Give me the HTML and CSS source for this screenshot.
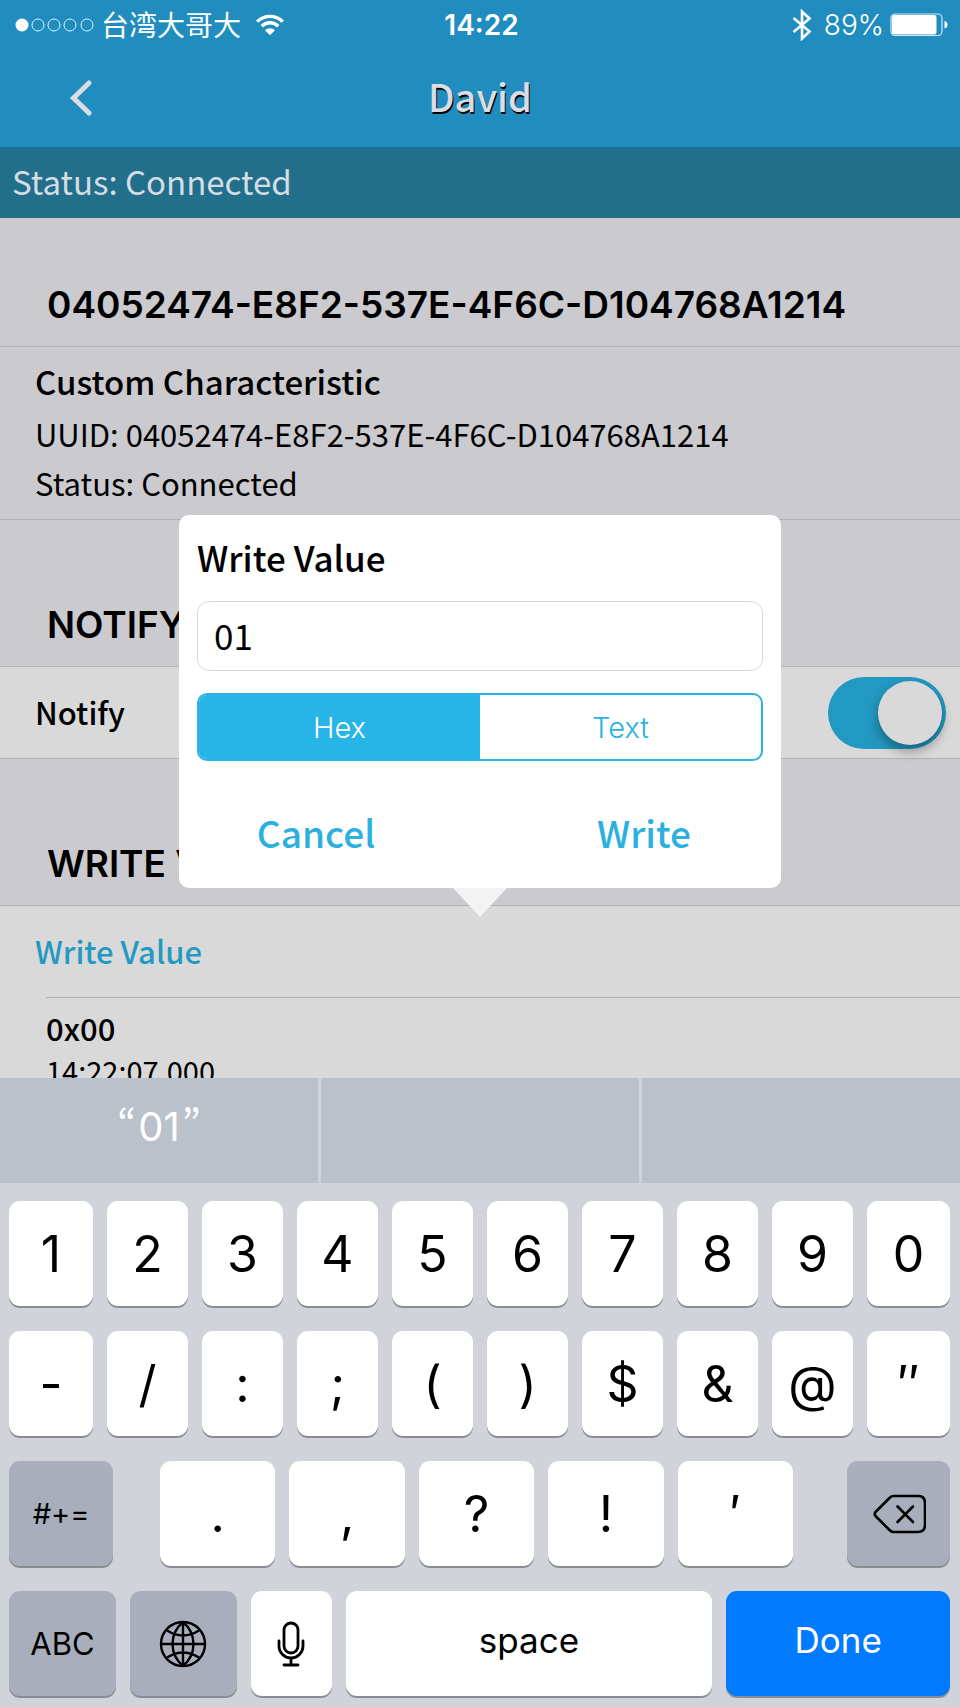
FILE: index.html
```html
<!DOCTYPE html>
<html lang="en">
<head>
<meta charset="utf-8">
<meta name="viewport" content="width=device-width, initial-scale=1">
<title>David</title>
<link rel="stylesheet" href="styles.css">
</head>
<body>
<div class="app">
  <header class="top">
    <div class="statusbar">
      <div class="carrier">
        <svg class="signal" viewBox="0 0 80 16" aria-hidden="true">
          <circle cx="7" cy="8" r="6.5" fill="#fff"/>
          <g fill="none" stroke="#d9f1fb" stroke-width="1"><circle cx="23" cy="8" r="6"/><circle cx="39" cy="8" r="6"/><circle cx="55" cy="8" r="6"/><circle cx="72" cy="8" r="6"/></g>
        </svg>
        <span class="carrier-name" lang="zh-CN">台湾大哥大</span>
        <svg class="wifi" viewBox="0 0 28 22" aria-hidden="true">
          <g fill="none" stroke="#fff" stroke-width="3.400"><path d="M1.2 7.6a18.2 18.2 0 0 1 25.6 0"/><path d="M5.800 12.2a11.6 11.6 0 0 1 16.4 0"/></g>
          <path d="M9 16.2a7.2 7.2 0 0 1 10 0L14 21.2z" fill="#fff"/>
        </svg>
      </div>
      <time class="clock">14:22</time>
      <div class="power">
        <svg class="bluetooth" viewBox="0 0 20 32" aria-hidden="true"><path d="M1.500 9L17.500 22.500 10 29.500V2.500L17.500 9.500 1.500 23" fill="none" stroke="#fff" stroke-width="2.600"/></svg>
        <span class="percent">89%</span>
        <svg class="battery" viewBox="0 0 58 24" aria-hidden="true">
          <rect x="1" y="1" width="51" height="21.500" rx="4" fill="none" stroke="#cdebf8" stroke-width="1.200"/>
          <rect x="2" y="2" width="44.500" height="19.500" rx="2.500" fill="#fff"/>
          <path d="M54.500 8q3 1 3 3.800t-3 3.800z" fill="#fff"/>
        </svg>
      </div>
    </div>
    <nav class="navbar">
      <button class="back" aria-label="Back"><svg viewBox="0 0 24 36" aria-hidden="true"><path d="M20 3L4.500 18 20 33" fill="none" stroke="#dcdce2" stroke-width="5" stroke-linecap="round"/></svg></button>
      <h1 class="title">David</h1>
    </nav>
  </header>
  <p class="connection">Status: Connected</p>

  <main class="content">
    <h2 class="section">04052474-E8F2-537E-4F6C-D104768A1214</h2>
    <div class="summary">
      <h3 class="summary-name">Custom Characteristic</h3>
      <p>UUID: 04052474-E8F2-537E-4F6C-D104768A1214</p>
      <p>Status: Connected</p>
    </div>

    <h2 class="section section-later">NOTIFY</h2>
    <div class="row">
      <label class="row-label" for="notify">Notify</label>
      <input class="switch" id="notify" type="checkbox" role="switch" checked>
    </div>

    <h2 class="section section-later">WRITE VALUE</h2>
    <div class="write">
      <button class="row write-open"><span class="row-label">Write Value</span></button>
      <div class="entry">
        <strong class="entry-value">0x00</strong>
        <time class="entry-time">14:22:07.000</time>
      </div>

      <form class="popup" role="dialog" aria-labelledby="popup-title">
        <label class="popup-title" id="popup-title" for="value">Write Value</label>
        <input class="value" id="value" type="text" value="01">
        <div class="segments" role="radiogroup" aria-label="Format">
          <label class="segment"><input type="radio" name="format" checked><span>Hex</span></label>
          <label class="segment"><input type="radio" name="format"><span>Text</span></label>
        </div>
        <div class="actions">
          <button type="button">Cancel</button>
          <button type="button">Write</button>
        </div>
      </form>
    </div>
  </main>

  <section class="keyboard" aria-label="Keyboard">
    <div class="suggestions">
      <button><span class="quote">“</span>01<span class="quote">”</span></button><button aria-label="Suggestion 2"></button><button aria-label="Suggestion 3"></button>
    </div>
    <div class="keys">
      <div class="keyrow tens">
        <button class="key">1</button><button class="key">2</button><button class="key">3</button><button class="key">4</button><button class="key">5</button><button class="key">6</button><button class="key">7</button><button class="key">8</button><button class="key">9</button><button class="key">0</button>
      </div>
      <div class="keyrow tens">
        <button class="key">-</button><button class="key">/</button><button class="key">:</button><button class="key">;</button><button class="key">(</button><button class="key">)</button><button class="key">$</button><button class="key">&amp;</button><button class="key">@</button><button class="key">″</button>
      </div>
      <div class="keyrow marks">
        <button class="key grey symbols">#+=</button>
        <div class="marks-group"><button class="key">.</button><button class="key">,</button><button class="key">?</button><button class="key">!</button><button class="key">′</button></div>
        <button class="key grey" aria-label="Delete"><svg class="icon-delete" viewBox="0 0 54 40" fill="none" stroke="#000" stroke-width="2.600" stroke-linecap="round" stroke-linejoin="round" aria-hidden="true"><path d="M21.500 2H46q7 0 7 7v22q0 7-7 7H21.500q-2 0-3.500-1.500L3.500 22q-1.500-2 0-4L18 3.500Q19.500 2 21.500 2z"/><path d="M25.500 12.500l15.500 15.500M41 12.500L25.500 28"/></svg></button>
      </div>
      <div class="keyrow bottom">
        <button class="key grey abc">ABC</button>
        <button class="key grey" aria-label="Next keyboard"><svg class="icon-globe" viewBox="0 0 48 48" fill="none" stroke="#000" stroke-width="2.400" aria-hidden="true"><circle cx="24" cy="24" r="22"/><path d="M24 2v44M2 24h44M24 2C10 14 10 34 24 46M24 2c14 12 14 32 0 44M8 10.500q16 10 32 0M8 37.500q16-10 32 0"/></svg></button>
        <button class="key" aria-label="Dictate"><svg class="icon-mic" viewBox="0 0 28 46" fill="none" stroke="#000" stroke-width="2.800" stroke-linecap="round" aria-hidden="true"><rect x="7" y="2" width="14" height="30" rx="7"/><path d="M2 20v5a12 12 0 0 0 24 0v-5M14 37v7M7 44h14"/></svg></button>
        <button class="key word">space</button>
        <button class="key word done">Done</button>
      </div>
    </div>
  </section>
</div>
</body>
</html>
```

FILE: styles.css
```css
* { box-sizing: border-box; }

body, h1, h2, h3, p { margin: 0; }

body {
  font-family: "Noto Sans CJK SC", "Noto Sans", sans-serif;
  color: #000;
  background: #cbcacf;
}

button {
  margin: 0;
  padding: 0;
  border: 0;
  background: none;
  color: inherit;
  font: inherit;
}

svg { display: block; }

.app {
  display: flex;
  flex-direction: column;
  height: 100vh;
  overflow: hidden;
}

.top {
  background: #218dbf;
  border-bottom: 2px solid #1b6f96;
}

.statusbar {
  display: grid;
  grid-template-columns: 1fr auto 1fr;
  align-items: center;
  height: 48px;
  padding: 0 12px 0 15px;
  font-family: Inter, sans-serif;
  font-size: 28px;
  line-height: 48px;
  color: #fff;
}

.carrier, .power { display: flex; align-items: center; }
.power { justify-content: flex-end; gap: 6px; }
.signal { width: 80px; height: 16px; }
.carrier-name {
  margin: 0 15px 2px 6px;
  font-family: "Noto Sans CJK SC", sans-serif;
  font-weight: 400;
}
.wifi { width: 28px; height: 22px; }
.clock { font-weight: 600; }
.percent { font-weight: 300; }
.bluetooth { width: 20px; height: 32px; margin-right: 6px; }
.battery { width: 58px; height: 24px; }

.navbar {
  display: grid;
  grid-template-columns: 150px 1fr 150px;
  align-items: center;
  height: 99px;
}
.back { padding-left: 69px; }
.back svg { width: 24px; height: 36px; }
.title {
  padding-bottom: 4px;
  font-size: 38px;
  font-weight: 500;
  line-height: 56px;
  text-align: center;
  color: #dcdce2;
  text-shadow: 1px 2px 0 #000;
}

.connection {
  padding: 0 12px 4px;
  background: #216f8a;
  color: #d6dce4;
  font-size: 33px;
  line-height: 65px;
}

.content { flex: 1; min-height: 0; overflow: hidden; }

.section {
  padding: 61px 47px 15px;
  border-bottom: 1px solid #b2b1b6;
  font-family: Inter, sans-serif;
  font-size: 37px;
  font-weight: 600;
  line-height: 52px;
}
.section-later { padding-top: 79px; }

.summary {
  padding: 10px 35px 12px;
  border-bottom: 1px solid #b2b1b6;
  font-size: 31px;
  line-height: 49px;
}
.summary-name { padding-bottom: 3px; font-size: 33px; font-weight: 500; }

.row {
  display: flex;
  align-items: center;
  justify-content: space-between;
  width: 100%;
  height: 92px;
  padding: 0 14px 0 35px;
  background: #d9d9d9;
  border-bottom: 1px solid #b2b1b6;
  font-size: 31px;
  font-weight: 500;
}
.row-label { padding-bottom: 3px; }

.switch {
  appearance: none;
  width: 118px;
  height: 72px;
  margin: 0;
  padding: 4px;
  border-radius: 36px;
  background: #2299c2;
}
.switch::before {
  content: "";
  display: block;
  width: 64px;
  height: 64px;
  margin-left: 46px;
  border-radius: 50%;
  background: #d9d9d9;
  box-shadow: 0 6px 12px rgba(0, 0, 0, 0.35);
}

.write { position: relative; background: #d9d9d9; }
.write-open { height: 91px; border: 0; background: none; color: #2499c1; }
.entry {
  display: flex;
  flex-direction: column;
  margin-left: 46px;
  padding-top: 7px;
  border-top: 1px solid #b2b1b6;
}
.entry-value { font-size: 31px; font-weight: 500; line-height: 46px; }
.entry-time { font-size: 29px; line-height: 38px; }

.popup {
  position: absolute;
  left: 50%;
  bottom: calc(100% + 18px);
  transform: translateX(-50%);
  display: flex;
  flex-direction: column;
  width: 602px;
  max-width: 90%;
  padding: 14px 18px 26px;
  border-radius: 10px;
  background: #fff;
}
.popup::after {
  content: "";
  position: absolute;
  top: 100%;
  left: 50%;
  width: 54px;
  height: 29px;
  transform: translateX(-50%);
  background: #f3f3f3;
  clip-path: polygon(0 0, 100% 0, 50% 100%);
}
.popup-title { font-size: 35px; font-weight: 500; line-height: 56px; }
.value {
  width: 100%;
  height: 70px;
  margin-top: 16px;
  padding: 0 16px 4px;
  border: 1px solid #d6d6d6;
  border-radius: 12px;
  background: #fff;
  color: #000;
  font: inherit;
  font-size: 35px;
}
.segments {
  display: flex;
  height: 68px;
  margin-top: 22px;
  overflow: hidden;
  border: 2px solid #29b2e2;
  border-radius: 10px;
  font-family: Inter, sans-serif;
  font-size: 29px;
  font-weight: 300;
  color: #29b2e2;
}
.segment { flex: 1; display: flex; }
.segment input { position: absolute; opacity: 0; }
.segment span { flex: 1; display: flex; align-items: center; justify-content: center; }
.segment input:checked + span { background: #27b4e6; color: #fff; }
.actions {
  display: flex;
  justify-content: space-between;
  margin-top: 41px;
  color: #2bb0df;
  font-size: 37px;
  font-weight: 500;
  line-height: 60px;
}
.actions button { flex: 0 1 238px; }

.keyboard {
  flex: none;
  background: #d0d3da;
  font-family: Inter, sans-serif;
}

.suggestions {
  display: grid;
  grid-template-columns: 1fr 1fr 1fr;
  gap: 3px;
  height: 105px;
}
.suggestions button {
  display: flex;
  align-items: center;
  justify-content: center;
  gap: 2px;
  padding-bottom: 8px;
  background: #bac1ca;
  color: #fff;
  font-size: 40px;
}
.quote {
  padding-bottom: 12px;
  font-family: "Noto Sans CJK KR", sans-serif;
  line-height: 60px;
}

.keys {
  display: flex;
  flex-direction: column;
  gap: 25px;
  padding: 18px 10px 11px 9px;
}
.keyrow { display: grid; gap: 14px; height: 105px; }
.tens { grid-template-columns: 84fr repeat(8, 81fr) 83fr; }
.marks { grid-template-columns: 104fr 640fr 103fr; gap: 47px; }
.marks-group {
  display: grid;
  grid-template-columns: repeat(5, 1fr);
  gap: 14px;
  padding-right: 7px;
}
.bottom { grid-template-columns: 107fr 107fr 81fr 367fr 224fr; }

.key {
  display: flex;
  align-items: center;
  justify-content: center;
  min-width: 0;
  border-radius: 11px;
  background: #fff;
  box-shadow: 0 2px 0 #8b8c92;
  font-size: 50px;
  line-height: 60px;
}
.grey { background: #a8aebb; }
.symbols { font-size: 29px; }
.abc { font-size: 31px; }
.word { padding-bottom: 8px; font-size: 35px; }
.done { background: #007aff; color: #fff; }
.icon-delete { width: 54px; height: 40px; }
.icon-globe { width: 48px; height: 48px; }
.icon-mic { width: 28px; height: 46px; }
```
